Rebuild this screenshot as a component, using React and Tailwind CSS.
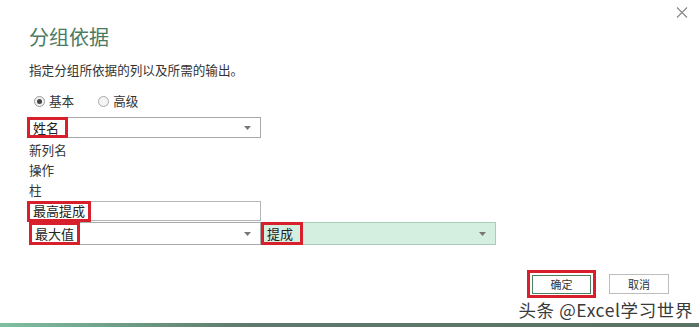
import React from 'react';

const font = "font-['Noto_Sans_CJK_SC','Noto_Sans',sans-serif]";

const Caret = () => (
  <svg width="7" height="4" viewBox="0 0 7 4" className="shrink-0">
    <path d="M0 0h7L3.5 4z" fill="#777" />
  </svg>
);

const App = () => {
  return (
    <div className={`w-[699px] h-[327px] bg-white flex flex-col overflow-hidden ${font}`}>
      {/* Header with close */}
      <div className="h-[25px] flex justify-end pr-[11px] pt-[7px]">
        <svg width="12" height="11" viewBox="0 0 12 11">
          <path d="M1 0.5l10 10M11 0.5l-10 10" stroke="#8a8a8a" strokeWidth="1.2" fill="none" />
        </svg>
      </div>

      <div className="flex-1 flex flex-col pl-[29px]">
        <h1 className="text-[20px] leading-[24px] text-[#4a7a62] font-normal">分组依据</h1>
        <p className="mt-[13px] text-[12.6px] leading-[16px] text-[#333]">指定分组所依据的列以及所需的输出。</p>

        {/* Radios */}
        <div className="mt-[15px] h-[16px] flex items-center text-[12.6px] text-[#333]">
          <span className="w-[11px] h-[11px] rounded-full border border-[#9a9a9a] bg-[#f2f2f2] flex items-center justify-center ml-[5px]">
            <span className="w-[5px] h-[5px] rounded-full bg-[#444]" />
          </span>
          <span className="ml-[4px]">基本</span>
          <span className="ml-[24px] w-[11px] h-[11px] rounded-full border border-[#a9a9a9] bg-[#f4f4f4]" />
          <span className="ml-[4px]">高级</span>
        </div>

        {/* Group by dropdown */}
        <div className="mt-[8px] -ml-[2px] w-[234px] h-[21px] border border-[#a9a9a9] flex items-center justify-between pr-[9px]">
          <span className="h-[21px] -my-px -ml-px w-[41px] border-[3px] border-[#d7202b] flex items-center pl-[3px] text-[13px] text-[#222]">姓名</span>
          <Caret />
        </div>

        <div className="mt-[2px] flex flex-col text-[12.6px] leading-[20px] text-[#333]">
          <span>新列名</span>
          <span>操作</span>
          <span>柱</span>
        </div>

        {/* New column name input */}
        <div className="mt-px w-[232px] h-[20px] border border-[#b5b5b5] flex items-center">
          <span className="h-[21px] -my-px -ml-[3px] w-[64px] border-[3px] border-[#d7202b] flex items-center pl-[3px] text-[13px] text-[#222]">最高提成</span>
        </div>

        {/* Operation + column */}
        <div className="mt-px flex">
          <div className="w-[232px] h-[23px] border border-[#a9a9a9] flex items-center justify-between pr-[9px]">
            <span className="h-[23px] -my-px -ml-px w-[51px] border-[3px] border-[#d7202b] flex items-center pl-[3px] text-[13px] text-[#222]">最大值</span>
            <Caret />
          </div>
          <div className="w-[235px] h-[23px] border border-[#a8cdb8] bg-[#d4eedf] flex items-center justify-between pr-[9px]">
            <span className="h-[23px] -my-px -ml-px w-[42px] border-[3px] border-[#d7202b] flex items-center pl-[3px] text-[13px] text-[#222]">提成</span>
            <Caret />
          </div>
        </div>

        {/* Buttons */}
        <div className="mt-[25px] flex justify-end pr-[30px] gap-[13px] items-center">
          <div className="w-[69px] h-[28px] border-[3px] border-[#d7202b] flex items-center justify-center">
            <button className="w-[59px] h-[19px] border border-[#4d8063] bg-white text-[11px] text-[#333] leading-none">确定</button>
          </div>
          <button className="w-[60px] h-[20px] border border-[#bdbdbd] bg-white text-[11px] text-[#333] leading-none">取消</button>
        </div>

        <div className="mt-[2px] flex justify-end pr-[6px]">
          <span className="text-[17.5px] leading-[20px] tracking-[0.6px] text-[#3a3a3a] [text-shadow:0_0_2px_#fff]">头条 @Excel学习世界</span>
        </div>
      </div>

      {/* bottom bar */}
      <div className="h-[4px] bg-[linear-gradient(90deg,#7fbfa0_0%,#5e7a6c_35%,#5a7264_100%)]" />
    </div>
  );
};

export default App;
